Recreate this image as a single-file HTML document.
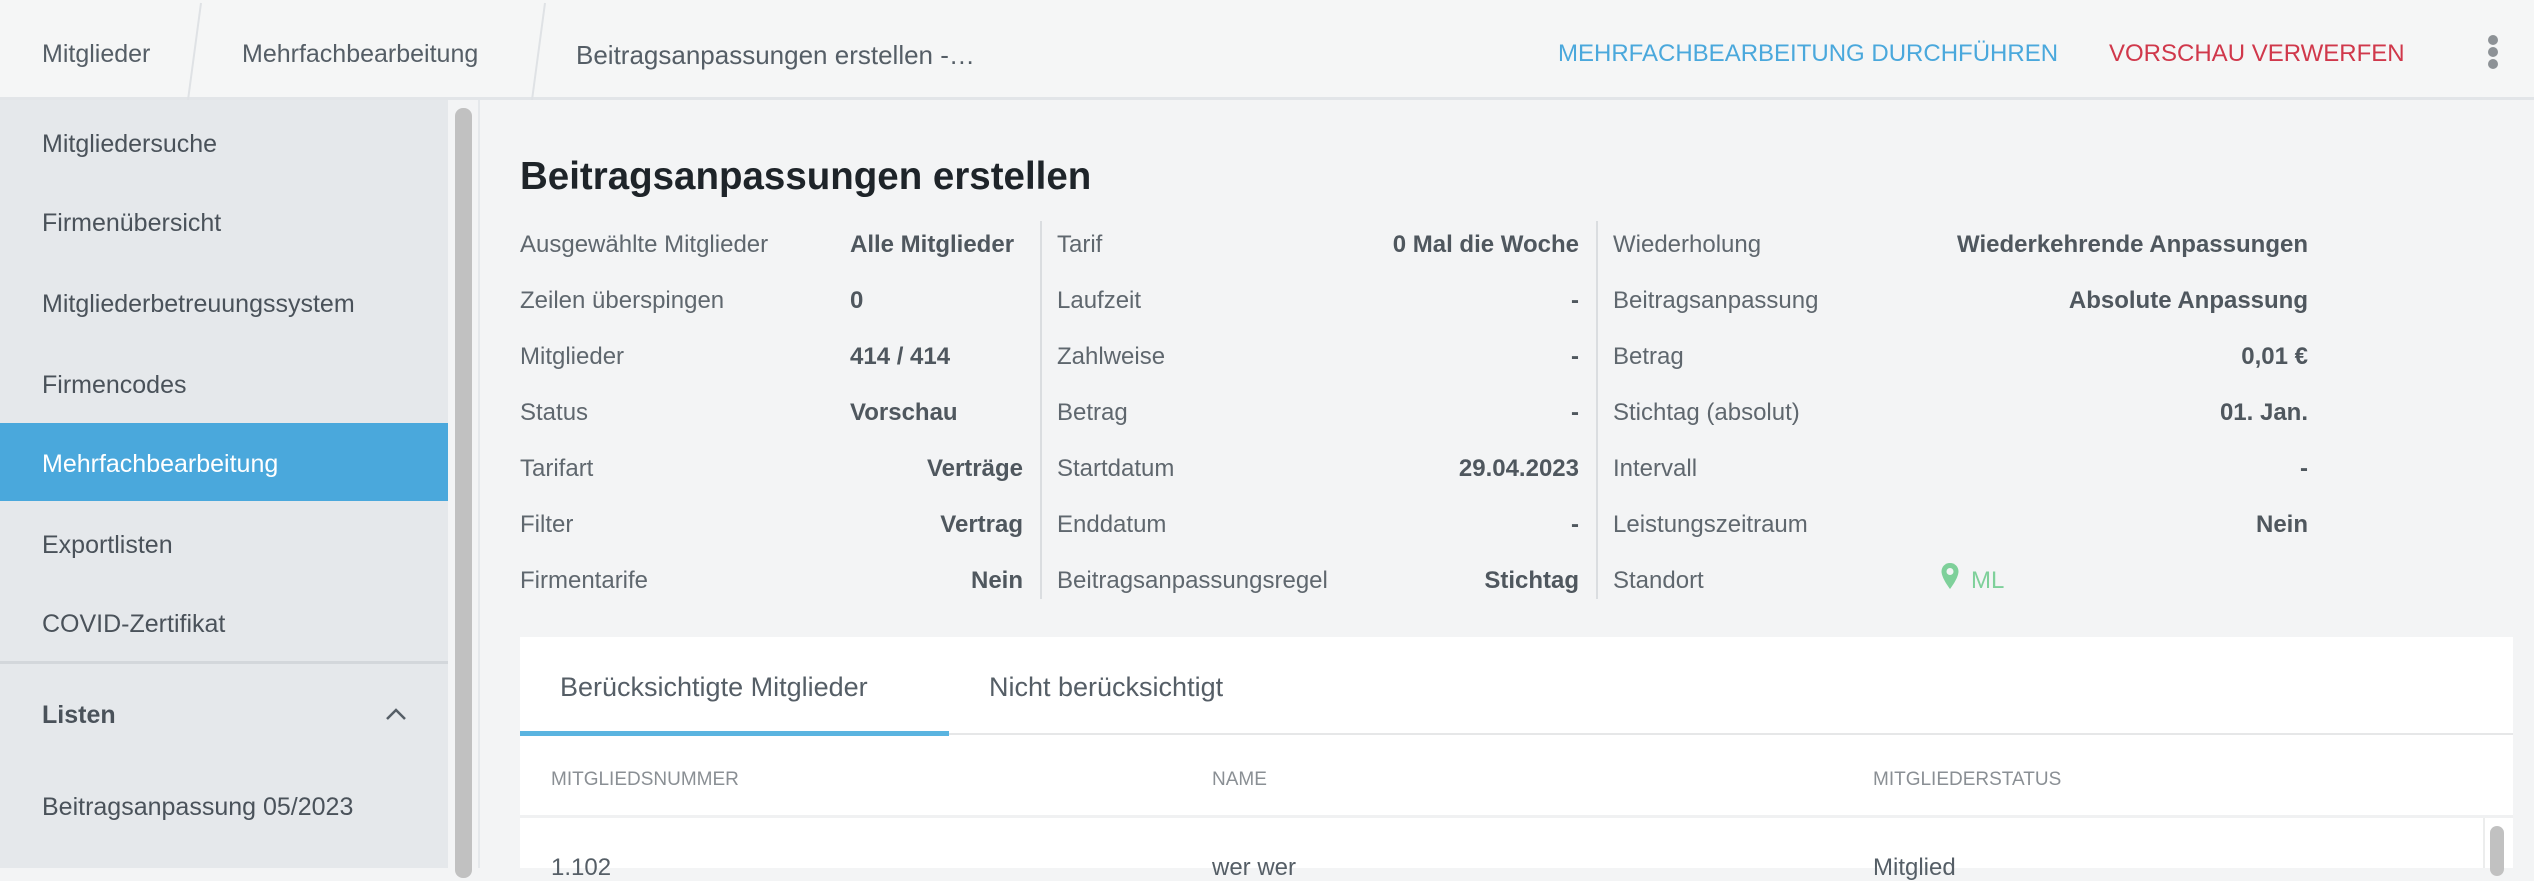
<!DOCTYPE html>
<html><head><meta charset="utf-8"><style>
*{margin:0;padding:0;box-sizing:border-box}
body{width:2534px;height:868px;overflow:hidden;background:#f3f4f5;font-family:"Liberation Sans",sans-serif;color:#555e66;position:relative}
.a{position:absolute;white-space:nowrap;line-height:1}
.t{margin-top:3px}
#hdr{position:absolute;left:0;top:0;width:2534px;height:100px;background:#f5f6f6;border-bottom:3px solid #e2e5e8}
.bc{font-size:25px;top:39px;color:#555e66}
#side{position:absolute;left:0;top:100px;width:448px;height:768px;background:#e5e8eb}
.si{font-size:25px;left:42px;color:#4a525a}
#act{position:absolute;left:0;top:423px;width:448px;height:78px;background:#4aa8dc}
.l{font-size:24px;color:#5f676e}
.v{font-size:24px;font-weight:bold;color:#4f575e}
.l,.v,.si,.bc{margin-top:3px}
.r{text-align:right}
</style></head><body>
<div id="hdr"></div>
<svg class="a" style="left:0;top:0" width="600" height="100"><line x1="201" y1="3" x2="188" y2="100" stroke="#dfe2e5" stroke-width="2"/><line x1="545" y1="3" x2="532" y2="100" stroke="#dfe2e5" stroke-width="2"/></svg>
<div class="a bc" style="left:42px">Mitglieder</div>
<div class="a bc" style="left:242px">Mehrfachbearbeitung</div>
<div class="a bc" style="left:576px;font-size:26px">Beitragsanpassungen erstellen -…</div>
<div class="a t" style="left:1558px;top:39px;font-size:24px;color:#4aa8dc">MEHRFACHBEARBEITUNG DURCHFÜHREN</div>
<div class="a t" style="left:2109px;top:39px;font-size:24px;color:#d0384b">VORSCHAU VERWERFEN</div>
<div class="a" style="left:2488px;top:35px;width:10px;height:10px;border-radius:5px;background:#8d9296"></div>
<div class="a" style="left:2488px;top:47px;width:10px;height:10px;border-radius:5px;background:#8d9296"></div>
<div class="a" style="left:2488px;top:59px;width:10px;height:10px;border-radius:5px;background:#8d9296"></div>

<div id="side"></div>
<div id="act"></div>
<div class="a" style="left:455px;top:108px;width:17px;height:770px;border-radius:8px;background:#c1c1c1"></div>
<div class="a" style="left:478px;top:100px;width:2px;height:768px;background:#e5e8eb"></div>
<div class="a si" style="top:129px">Mitgliedersuche</div>
<div class="a si" style="top:208px">Firmenübersicht</div>
<div class="a si" style="top:289px">Mitgliederbetreuungssystem</div>
<div class="a si" style="top:370px">Firmencodes</div>
<div class="a si" style="top:449px;color:#fff">Mehrfachbearbeitung</div>
<div class="a si" style="top:530px">Exportlisten</div>
<div class="a si" style="top:609px">COVID-Zertifikat</div>
<div class="a" style="left:0;top:661px;width:448px;height:3px;background:#d3d7db"></div>
<div class="a si" style="top:700px;font-weight:bold">Listen</div>
<svg class="a" style="left:384px;top:706px" width="24" height="16"><polyline points="3,13 12,4 21,13" fill="none" stroke="#555e66" stroke-width="2.5"/></svg>
<div class="a si" style="top:792px">Beitragsanpassung 05/2023</div>

<div class="a t" style="left:520px;top:155px;font-size:38.5px;font-weight:bold;color:#1e2429">Beitragsanpassungen erstellen</div>
<div class="a" style="left:1040px;top:221px;width:2px;height:378px;background:#dadde0"></div>
<div class="a" style="left:1596px;top:221px;width:2px;height:378px;background:#dadde0"></div>

<div class="a l" style="left:520px;top:230px">Ausgewählte Mitglieder</div><div class="a v" style="left:850px;top:230px">Alle Mitglieder</div>
<div class="a l" style="left:520px;top:286px">Zeilen überspingen</div><div class="a v" style="left:850px;top:286px">0</div>
<div class="a l" style="left:520px;top:342px">Mitglieder</div><div class="a v" style="left:850px;top:342px">414 / 414</div>
<div class="a l" style="left:520px;top:398px">Status</div><div class="a v" style="left:850px;top:398px">Vorschau</div>
<div class="a l" style="left:520px;top:454px">Tarifart</div><div class="a v r" style="right:1511px;top:454px">Verträge</div>
<div class="a l" style="left:520px;top:510px">Filter</div><div class="a v r" style="right:1511px;top:510px">Vertrag</div>
<div class="a l" style="left:520px;top:566px">Firmentarife</div><div class="a v r" style="right:1511px;top:566px">Nein</div>

<div class="a l" style="left:1057px;top:230px">Tarif</div><div class="a v" style="right:955px;top:230px">0 Mal die Woche</div>
<div class="a l" style="left:1057px;top:286px">Laufzeit</div><div class="a v" style="right:955px;top:286px">-</div>
<div class="a l" style="left:1057px;top:342px">Zahlweise</div><div class="a v" style="right:955px;top:342px">-</div>
<div class="a l" style="left:1057px;top:398px">Betrag</div><div class="a v" style="right:955px;top:398px">-</div>
<div class="a l" style="left:1057px;top:454px">Startdatum</div><div class="a v" style="right:955px;top:454px">29.04.2023</div>
<div class="a l" style="left:1057px;top:510px">Enddatum</div><div class="a v" style="right:955px;top:510px">-</div>
<div class="a l" style="left:1057px;top:566px">Beitragsanpassungsregel</div><div class="a v" style="right:955px;top:566px">Stichtag</div>

<div class="a l" style="left:1613px;top:230px">Wiederholung</div><div class="a v" style="right:226px;top:230px">Wiederkehrende Anpassungen</div>
<div class="a l" style="left:1613px;top:286px">Beitragsanpassung</div><div class="a v" style="right:226px;top:286px">Absolute Anpassung</div>
<div class="a l" style="left:1613px;top:342px">Betrag</div><div class="a v" style="right:226px;top:342px">0,01 €</div>
<div class="a l" style="left:1613px;top:398px">Stichtag (absolut)</div><div class="a v" style="right:226px;top:398px">01. Jan.</div>
<div class="a l" style="left:1613px;top:454px">Intervall</div><div class="a v" style="right:226px;top:454px">-</div>
<div class="a l" style="left:1613px;top:510px">Leistungszeitraum</div><div class="a v" style="right:226px;top:510px">Nein</div>
<div class="a l" style="left:1613px;top:566px">Standort</div>
<svg class="a" style="left:1940px;top:562px" width="20" height="28" viewBox="0 0 20 28"><path d="M10 1C5 1 1.5 4.8 1.5 9.5 1.5 16 10 27 10 27S18.5 16 18.5 9.5C18.5 4.8 15 1 10 1Z" fill="#7ed09a"/><circle cx="10" cy="9.5" r="3.5" fill="#f3f4f5"/></svg>
<div class="a l" style="left:1971px;top:566px;color:#7ed09a">ML</div>

<div class="a" style="left:520px;top:637px;width:1993px;height:231px;background:#fff"></div>
<div class="a t" style="left:560px;top:671px;font-size:27px;color:#555e66">Berücksichtigte Mitglieder</div>
<div class="a t" style="left:989px;top:671px;font-size:27px;color:#555e66">Nicht berücksichtigt</div>
<div class="a" style="left:520px;top:733px;width:1993px;height:2px;background:#e6e7e8"></div>
<div class="a" style="left:520px;top:731px;width:429px;height:5px;background:#5ab4e0"></div>
<div class="a t" style="left:551px;top:767px;font-size:19px;color:#8a8f94">MITGLIEDSNUMMER</div>
<div class="a t" style="left:1212px;top:767px;font-size:19px;color:#8a8f94">NAME</div>
<div class="a t" style="left:1873px;top:767px;font-size:19px;color:#8a8f94">MITGLIEDERSTATUS</div>
<div class="a" style="left:520px;top:815px;width:1993px;height:3px;background:#f0f1f2"></div>
<div class="a t" style="left:551px;top:853px;font-size:24px;color:#555e66">1.102</div>
<div class="a t" style="left:1212px;top:853px;font-size:24px;color:#555e66">wer wer</div>
<div class="a t" style="left:1873px;top:853px;font-size:24px;color:#555e66">Mitglied</div>
<div class="a" style="left:2483px;top:818px;width:2px;height:50px;background:#eceded"></div>
<div class="a" style="left:2490px;top:826px;width:14px;height:50px;border-radius:7px;background:#c1c1c1"></div>
</body></html>
